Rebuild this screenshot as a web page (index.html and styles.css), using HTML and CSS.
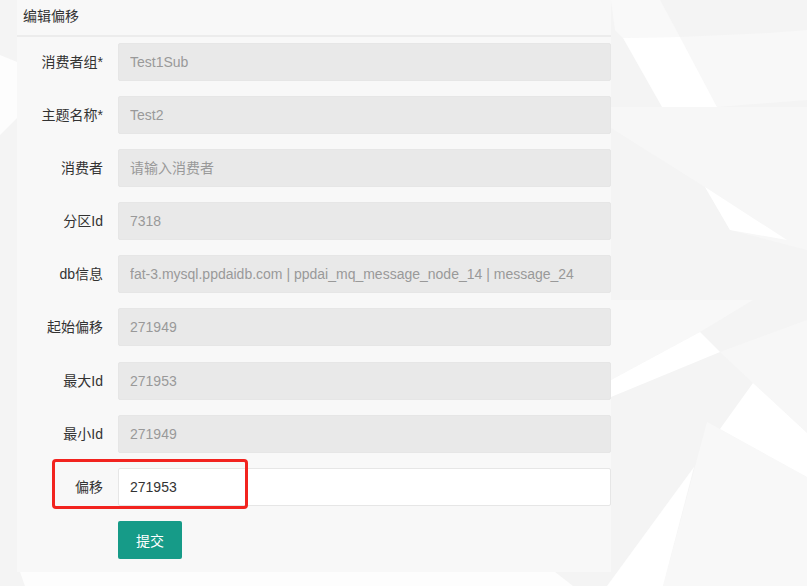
FILE: index.html
```html
<!DOCTYPE html>
<html lang="zh-CN">
<head>
<meta charset="UTF-8" />
<title>编辑偏移</title>
<link rel="stylesheet" href="styles.css">
</head>
<body>

<svg class="backdrop" width="807" height="586" viewBox="0 0 807 586" aria-hidden="true">
  <!-- lighter facets -->
  <polygon points="611,0 660,0 680,37 623,38 615,30" fill="#f9f9f9" />
  <polygon points="680,37 770,33 807,30 807,100 717,107" fill="#f8f8f8" />
  <polygon points="611,107 807,107 807,250 730,230 705,187 611,128" fill="#f7f7f7" />
  <polygon points="611,300 753,300 700,332 611,380" fill="#f8f8f8" />
  <polygon points="720,352 807,320 807,433 753,383" fill="#f7f7f7" />
  <polygon points="707,422 807,477 807,586 663,586" fill="#f8f8f8" />
  <!-- white facets -->
  <polygon points="623,38 680,37 717,107 662,107" fill="#ffffff" />
  <polygon points="705,187 787,240 730,230" fill="#ffffff" />
  <polygon points="611,380 700,332 720,352 611,397" fill="#ffffff" />
  <polygon points="753,383 807,433 807,477 720,429" fill="#ffffff" />
  <polygon points="694,467 663,586 607,586" fill="#ffffff" />
  <polygon points="0,55 17,62 17,118 0,135" fill="#fdfdfd" />
  <polygon points="20,572 555,572 573,586 25,586" fill="#fdfdfd" />
</svg>

<div class="panel">
  <div class="panel-head">编辑偏移</div>

  <form class="edit-form" onsubmit="return false">
    <div class="row">
      <label for="group">消费者组*</label>
      <input type="text" id="group" value="Test1Sub" disabled />
    </div>
    <div class="row">
      <label for="topic">主题名称*</label>
      <input type="text" id="topic" value="Test2" disabled />
    </div>
    <div class="row">
      <label for="consumer">消费者</label>
      <input type="text" id="consumer" placeholder="请输入消费者" disabled />
    </div>
    <div class="row">
      <label for="partition">分区Id</label>
      <input type="text" id="partition" value="7318" disabled />
    </div>
    <div class="row">
      <label for="db">db信息</label>
      <input type="text" id="db" value="fat-3.mysql.ppdaidb.com | ppdai_mq_message_node_14 | message_24" disabled />
    </div>
    <div class="row">
      <label for="start">起始偏移</label>
      <input type="text" id="start" value="271949" disabled />
    </div>
    <div class="row">
      <label for="maxId">最大Id</label>
      <input type="text" id="maxId" value="271953" disabled />
    </div>
    <div class="row">
      <label for="minId">最小Id</label>
      <input type="text" id="minId" value="271949" disabled />
    </div>
    <div class="row">
      <label for="offset">偏移</label>
      <input type="text" id="offset" value="271953" />
      <span class="mark"></span>
    </div>
    <div class="actions">
      <button type="submit" class="btn">提交</button>
    </div>
  </form>
</div>

</body>
</html>
```

FILE: styles.css
```css
body {
  margin: 0;
  width: 807px;
  height: 586px;
  overflow: hidden;
  background: #f4f4f4;
  font-family: "Liberation Sans", "Noto Sans CJK SC", sans-serif;
  font-size: 14px;
  color: #333;
  position: relative;
}
.backdrop {
  position: absolute;
  left: 0;
  top: 0;
  z-index: 0;
}
.panel {
  position: relative;
  z-index: 1;
  margin-left: 17px;
  width: 594px;
  height: 572px;
  background: #f8f8f8;
}
.panel-head {
  height: 35px;
  line-height: 33px;
  padding-left: 6px;
  border-bottom: 2px solid #ececec;
  color: #333;
}
.edit-form {
  padding-top: 6px;
}
.row {
  position: relative;
  display: flex;
  height: 38px;
  margin-bottom: 15.1px;
}
.row label {
  width: 86px;
  padding-right: 15px;
  text-align: right;
  line-height: 38px;
  color: #333;
}
.row input {
  flex: 1;
  height: 38px;
  box-sizing: border-box;
  padding: 0 11px;
  border: 1px solid #e6e6e6;
  border-radius: 2px;
  background: #fff;
  font-family: inherit;
  font-size: 14px;
  color: #333;
  outline: none;
}
.row input:disabled {
  background: #e9e9e9;
  border-color: #e6e6e6;
  color: #999;
}
.row input::placeholder {
  color: #999;
}
.mark {
  position: absolute;
  left: 35px;
  top: -9px;
  width: 196px;
  height: 50px;
  box-sizing: border-box;
  border: 3px solid #f2231f;
  border-radius: 4px;
  pointer-events: none;
}
.actions {
  padding-left: 101px;
}
.btn {
  width: 64px;
  height: 38px;
  border: none;
  border-radius: 2px;
  background: #169b88;
  color: #fff;
  font-family: inherit;
  font-size: 14px;
}
```
